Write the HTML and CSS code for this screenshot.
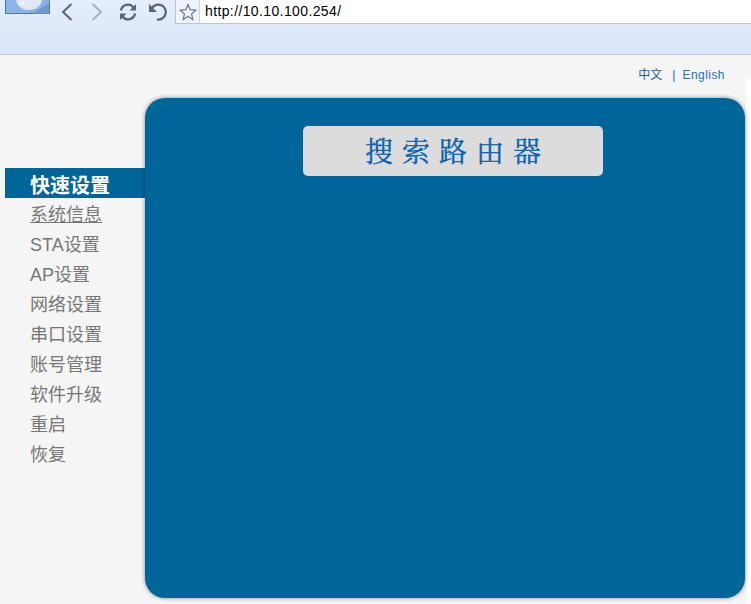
FILE: index.html
```html
<!DOCTYPE html>
<html lang="zh">
<head>
<meta charset="utf-8">
<title>快速设置</title>
<link rel="stylesheet" href="styles.css">
</head>
<body>
<header class="chrome">
  <div class="toolbar">
    <div class="logo">
      <svg width="50" height="14" viewBox="0 0 50 14"><rect x="0.5" y="-2" width="44" height="15.5" fill="#8db4e6" stroke="#4f78a8"/><path d="M27 13.500 L44 3 V13.500Z" fill="#7099cc"/><ellipse cx="24" cy="-1" rx="13" ry="11" fill="#dfe8f4"/><path d="M15 5l5-4" stroke="#fff" stroke-width="1.500"/></svg>
    </div>
    <button class="nav-btn back" aria-label="back"><svg width="14" height="20" viewBox="0 0 14 20"><path d="M11.500 2 L3 10 L11.500 18" fill="none" stroke="#5a6672" stroke-width="2"/></svg></button>
    <button class="nav-btn fwd" aria-label="forward"><svg width="14" height="20" viewBox="0 0 14 20"><path d="M2.500 2 L11 10 L2.500 18" fill="none" stroke="#a9b2bc" stroke-width="2"/></svg></button>
    <button class="nav-btn reload" aria-label="reload"><svg width="20" height="20" viewBox="0 0 20 20"><path d="M3 8.500A7 7 0 0 1 15.500 5.500M17 11.500A7 7 0 0 1 4.500 14.500" fill="none" stroke="#5a6672" stroke-width="2.400"/><path d="M18 2V8.500H11.500ZM2 18V11.500H8.500Z" fill="#5a6672"/></svg></button>
    <button class="nav-btn undo" aria-label="undo"><svg width="20" height="20" viewBox="0 0 20 20"><path d="M4 6A7.500 7.500 0 1 1 9 17.500" fill="none" stroke="#5a6672" stroke-width="2.300"/><path d="M1 2V10H9Z" fill="#5a6672"/></svg></button>
    <div class="address">
      <span class="star"><svg width="18" height="18" viewBox="0 0 18 18"><path d="M9 1.500L11.200 6.700L16.800 7.200L12.600 10.900L13.800 16.400L9 13.500L4.200 16.400L5.400 10.900L1.200 7.200L6.800 6.700Z" fill="none" stroke="#6b7680" stroke-width="1.200"/></svg></span>
      <span class="url">http://10.10.100.254/</span>
    </div>
  </div>
</header>
<div class="page">
  <div class="lang"><a>中文</a><span class="sep">|</span><a class="en">English</a></div>
  <div class="main">
    <nav class="menu">
      <a class="item active">快速设置</a>
      <a class="item under">系统信息</a>
      <a class="item">STA设置</a>
      <a class="item">AP设置</a>
      <a class="item">网络设置</a>
      <a class="item">串口设置</a>
      <a class="item">账号管理</a>
      <a class="item">软件升级</a>
      <a class="item">重启</a>
      <a class="item">恢复</a>
    </nav>
    <section class="panel">
      <button class="search">搜索路由器</button>
    </section>
  </div>
</div>
</body>
</html>
```
FILE: styles.css
```css
* { box-sizing: border-box; }
html, body { margin: 0; padding: 0; height: 100%; overflow: hidden; }
body { background: #f5f5f5; font-family: "Liberation Sans", "Noto Sans CJK SC", sans-serif; }

.chrome { height: 55px; background: linear-gradient(#e6eefc, #dde8fa 34px); border-bottom: 1px solid #bfcde3; }
.toolbar { height: 24px; display: flex; align-items: flex-start; }
.logo { width: 55px; height: 14px; padding-left: 5px; line-height: 0; }
.nav-btn { height: 24px; padding: 0; margin: 0; border: 0; background: none; display: flex; align-items: center; justify-content: center; flex: none; }
.back { width: 14px; margin-left: 5px; }
.fwd { width: 14px; margin-left: 16px; }
.reload { width: 20px; margin-left: 14px; }
.undo { width: 20px; margin-left: 10px; }
.address { margin-left: 7px; flex: 1; height: 24px; display: flex; background: #fff; border-left: 1px solid #b9c6da; border-bottom: 1px solid #b9c6da; }
.star { width: 24px; height: 23px; background: #eef3fc; border-right: 1px solid #c5d0e2; display: flex; align-items: center; justify-content: center; }
.url { padding-left: 5px; font: 14px/23px "Liberation Sans", sans-serif; letter-spacing: .38px; color: #000; }

.page { height: 549px; display: flex; flex-direction: column; }
.lang { height: 24px; padding: 12px 26px 0 0; display: flex; justify-content: flex-end; font-size: 12px; line-height: 16px; }
.lang a { color: #1f5f99; }
.lang .en { color: #2a6fb5; letter-spacing: .45px; }
.sep { margin: 0 7px 0 10px; color: #2a6da8; }

.main { display: flex; align-items: flex-start; padding-top: 19px; background: linear-gradient(to right, transparent 746px, #fff 746px); flex: 1; }
.menu { width: 145px; margin-top: 70px; padding-left: 5px; display: flex; flex-direction: column; flex: none; }
.item { height: 30px; padding-left: 25px; font-size: 18px; line-height: 34px; color: #777; }
.item.active { background: #006699; color: #fff; font-weight: 700; font-size: 20px; line-height: 36px; }
.item.under { text-decoration: underline; }

.panel { width: 600px; height: 500px; background: #006699; border-radius: 20px; box-shadow: 0 0 4px rgba(0,0,0,.45); display: flex; justify-content: flex-start; align-items: flex-start; padding: 28px 0 0 158px; flex: none; }
.search { width: 300px; height: 50px; padding: 0 0 3px 9px; border: 0; background: #dcdcdc; border-radius: 5px; color: #0a62ad; font-family: "Liberation Serif", "Noto Serif CJK SC", "Noto Sans CJK SC", serif; font-size: 28px; letter-spacing: 9px; -webkit-text-stroke: .35px #0a62ad; }
```
